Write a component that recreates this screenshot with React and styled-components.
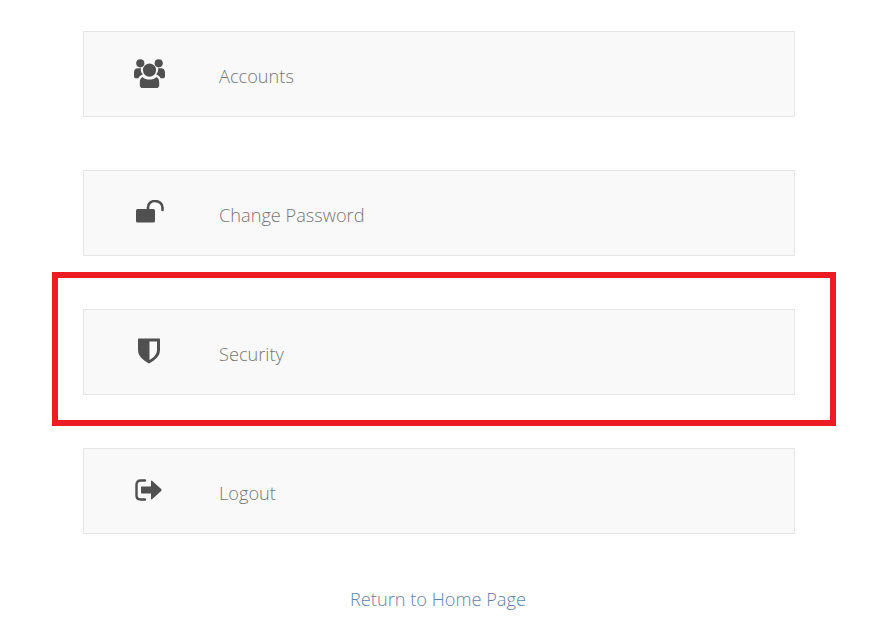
import React from 'react'
import styled, { createGlobalStyle } from 'styled-components'

const GlobalStyle = createGlobalStyle`
  html, body {
    margin: 0;
    padding: 0;
    background: #fff;
    font-family: "Open Sans", sans-serif;
  }
`

const Page = styled.div`
  width: 876px;
  height: 633px;
  overflow: hidden;
  padding: 31px 81px 0 83px;
  box-sizing: border-box;
`

const Menu = styled.div`
  display: flex;
  flex-direction: column;
  gap: 53px;
`

const Row = styled.a`
  display: flex;
  align-items: center;
  height: 86px;
  box-sizing: border-box;
  background: #f9f9f9;
  border: 1px solid #e5e5e5;
  color: #777;
  font-size: 18.2px;
  font-weight: 300;
  line-height: 24px;
  text-decoration: none;
`

const IconBox = styled.span`
  display: flex;
  justify-content: center;
  width: 130px;
  margin-right: 5px;
  transform: translateY(-1px);
  color: #505050;
`

const Label = styled.span`
  padding-top: 3px;
`

/* red annotation drawn over the security row */
const Highlight = styled.div`
  position: relative;
  &::after {
    content: '';
    position: absolute;
    top: -37px;
    bottom: -31px;
    left: -31px;
    right: -41px;
    border: 6px solid #ed1c24;
    pointer-events: none;
  }
`

const Footer = styled.div`
  margin-top: 53px;
  text-align: center;
  padding-right: 2px;
`

const HomeLink = styled.a`
  color: #5f83ad;
  font-size: 18.2px;
  font-weight: 300;
  line-height: 24px;
  text-decoration: none;
`

const UsersIcon = () => (
  <svg width="33" height="31" viewBox="0 0 34 32" fill="currentColor">
    <circle cx="7.5" cy="5.5" r="4.2" />
    <circle cx="26.5" cy="5.5" r="4.2" />
    <path d="M1 15c0-3 1.6-4.5 4-4.5h3.2c-.5 2.200.2 4.600 2 6.200C7.500 17.800 6 19.500 5.600 21H3c-1.300 0-2-1-2-2.200z" />
    <path d="M33 15c0-3-1.600-4.500-4-4.500h-3.200c.5 2.200-.2 4.600-2 6.200 2.700 1.100 4.200 2.800 4.600 4.300H31c1.300 0 2-1 2-2.200z" />
    <circle cx="17" cy="12.500" r="6.800" />
    <path d="M9.800 19.500c1.800 1.800 4.400 2.700 7.200 2.700s5.400-.9 7.200-2.700c1.900 1 2.800 3 2.800 5.500v3c0 1.800-1.100 3-3 3H10c-1.900 0-3-1.200-3-3v-3c0-2.500.9-4.500 2.800-5.500z" />
  </svg>
)

const UnlockIcon = () => (
  <svg width="29" height="24" viewBox="0 0 29 24" fill="currentColor">
    <rect x="1" y="9" width="19" height="13.500" rx="1.500" />
    <path d="M13 9V7.500C13 3.700 16 1 20 1s7.500 2.700 7.500 6.500V10" fill="none" stroke="currentColor" strokeWidth="2.600" strokeLinecap="round" />
  </svg>
)

const ShieldIcon = () => (
  <svg width="24" height="28" viewBox="0 0 24 28">
    <path d="M2 1.500h20c.6 0 1 .4 1 1V13c0 6.500-5.500 10.500-11 13.500C6.500 23.500 1 19.500 1 13V2.500c0-.6.4-1 1-1z" fill="currentColor" />
    <path d="M12.500 4.500h7.500V13c0 4.500-3.400 7.500-7.500 10z" fill="#f9f9f9" />
  </svg>
)

const LogoutIcon = () => (
  <svg width="28" height="24" viewBox="0 0 28 24" fill="currentColor">
    <path d="M10 2.500H5.500C3 2.500 1.500 4 1.500 6.500v11c0 2.500 1.500 4 4 4H10" fill="none" stroke="currentColor" strokeWidth="2.400" strokeLinecap="round" />
    <path d="M7 8.500h9V3.200c0-.6.700-.9 1.100-.5l9.300 8.600c.4.400.4 1 0 1.400l-9.300 8.600c-.4.400-1.100.1-1.100-.5v-5.300H7c-.6 0-1-.4-1-1V9.500c0-.6.400-1 1-1z" />
  </svg>
)

const App = () => (
  <Page>
    <GlobalStyle />
    <Menu>
      <Row href="#">
        <IconBox><UsersIcon /></IconBox>
        <Label>Accounts</Label>
      </Row>
      <Row href="#">
        <IconBox><UnlockIcon /></IconBox>
        <Label>Change Password</Label>
      </Row>
      <Highlight>
        <Row href="#">
          <IconBox><ShieldIcon /></IconBox>
          <Label>Security</Label>
        </Row>
      </Highlight>
      <Row href="#">
        <IconBox><LogoutIcon /></IconBox>
        <Label>Logout</Label>
      </Row>
    </Menu>
    <Footer>
      <HomeLink href="#">Return to Home Page</HomeLink>
    </Footer>
  </Page>
)

export default App
